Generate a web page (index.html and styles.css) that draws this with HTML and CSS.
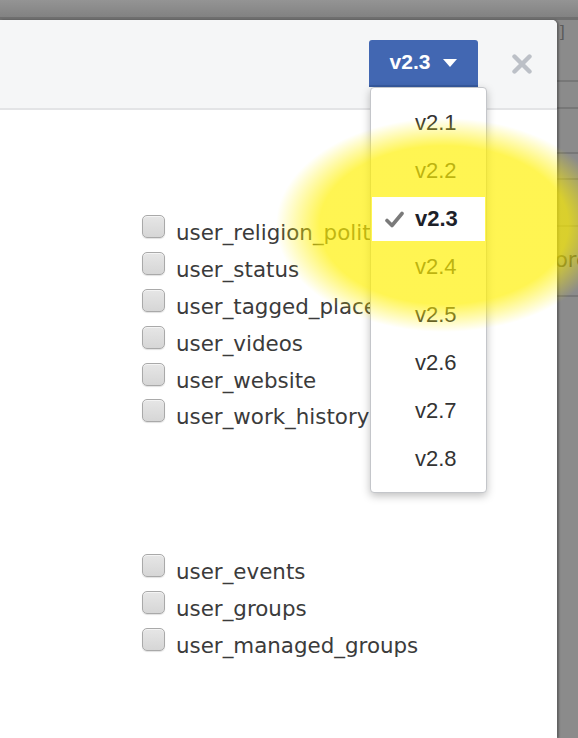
FILE: index.html
```html
<!DOCTYPE html>
<html>
<head>
<meta charset="utf-8">
<link rel="stylesheet" href="styles.css">
</head>
<body>
<div class="topbar"></div>
<div class="stage">
  <div class="modal">
    <header class="modal-head">
      <div class="version">
        <button class="ver-btn">v2.3<svg class="caret" width="14" height="8" viewBox="0 0 14 8"><path d="M0 0 H14 L7 8 Z" fill="#fff"/></svg></button>
        <ul class="ver-menu">
          <li>v2.1</li>
          <li>v2.2</li>
          <li class="selected"><svg class="check" width="19" height="17" viewBox="0 0 19 17"><path d="M2 9.5 L7 14.5 L17 2.5" fill="none" stroke="#7a7a7a" stroke-width="3.6" stroke-linecap="round" stroke-linejoin="round"/></svg>v2.3</li>
          <li>v2.4</li>
          <li>v2.5</li>
          <li>v2.6</li>
          <li>v2.7</li>
          <li>v2.8</li>
        </ul>
      </div>
      <button class="close" aria-label="Close"><svg width="20" height="20" viewBox="0 0 20 20"><path d="M2.5 2.5 L17.5 17.5 M17.5 2.5 L2.5 17.5" stroke="#bcc0c7" stroke-width="4.4" stroke-linecap="round"/></svg></button>
    </header>
    <div class="modal-body">
      <ul class="perm-group">
        <li><span class="box"></span>user_religion_politics</li>
        <li><span class="box"></span>user_status</li>
        <li><span class="box"></span>user_tagged_places</li>
        <li><span class="box"></span>user_videos</li>
        <li><span class="box"></span>user_website</li>
        <li><span class="box"></span>user_work_history</li>
      </ul>
      <ul class="perm-group second">
        <li><span class="box"></span>user_events</li>
        <li><span class="box"></span>user_groups</li>
        <li><span class="box"></span>user_managed_groups</li>
      </ul>
    </div>
  </div>
  <div class="backpage">
    <div class="bp-row r1"><span class="bracket">]</span></div>
    <div class="bp-row r2"></div>
    <div class="bp-row r3"></div>
    <div class="bp-row r4"></div>
    <div class="bp-row r5"></div>
    <div class="bp-row r6"><span class="bp-text">ore</span></div>
    <div class="bp-row r7"></div>
  </div>
</div>
<div class="highlight"></div>
</body>
</html>
```
FILE: styles.css
```css
* { box-sizing: border-box; }
html, body { margin: 0; padding: 0; }
body {
  width: 578px;
  height: 738px;
  overflow: hidden;
  background: #8b8b8b;
  font-family: "Liberation Sans", Arial, sans-serif;
}
.topbar {
  height: 20px;
  background: linear-gradient(#949494, #828282);
  border-bottom: 3px solid #6f6f6f;
}
.stage {
  display: flex;
  height: 718px;
}
.modal {
  width: 557px;
  flex: none;
  background: #fff;
  border-top-right-radius: 5px;
  box-shadow: 2px 0 2px rgba(0,0,0,0.3);
  position: relative;
}
.modal-head {
  height: 90px;
  background: #f5f6f7;
  border-top-right-radius: 5px;
  border-bottom: 2px solid #e3e4e6;
  display: flex;
  justify-content: flex-end;
  align-items: flex-start;
  padding: 20px 25px 0 0;
  gap: 34px;
}
.version { position: relative; }
.ver-btn {
  width: 109px;
  height: 47px;
  border: none;
  border-radius: 3px 3px 0 0;
  border-bottom: 2px solid #365a9f;
  background: #4267b2;
  color: #fff;
  font-family: "Liberation Sans", Arial, sans-serif;
  font-weight: bold;
  font-size: 21px;
  display: flex;
  align-items: center;
  justify-content: center;
  gap: 13px;
  padding: 0 0 1px 0;
  margin: 0;
}
.caret { margin-top: 1px; }
.ver-menu {
  position: absolute;
  top: 47px;
  left: 1px;
  width: 117px;
  margin: 0;
  padding: 13px 0 11px 0;
  list-style: none;
  background: #fff;
  border: 1px solid #c4c6ca;
  border-radius: 4px;
  box-shadow: 0 3px 8px rgba(0,0,0,0.25);
  display: flex;
  flex-direction: column;
  gap: 4px;
}
.ver-menu li {
  height: 44px;
  display: flex;
  align-items: center;
  padding-left: 44px;
  font-size: 22px;
  color: #333;
}
.ver-menu li.selected {
  position: relative;
  z-index: 6;
  background: #fff;
  font-weight: bold;
  color: #1d2129;
  padding-left: 13px;
  margin: 0 1px;
}
.check { margin-right: 11px; flex: none; }
.close {
  margin: 14px 0 0 0;
  padding: 0;
  border: none;
  background: none;
  width: 20px;
  height: 20px;
  display: block;
}
.close svg { display: block; }
.modal-body {
  padding: 105px 0 0 142px;
}
.perm-group {
  list-style: none;
  margin: 0;
  padding: 0;
}
.perm-group.second { margin-top: 118px; }
.perm-group li {
  font-family: "DejaVu Sans", Verdana, sans-serif;
  font-size: 21.4px;
  line-height: 36.9px;
  height: 36.9px;
  color: #3b3b3b;
  white-space: nowrap;
}
.box {
  display: inline-block;
  width: 23px;
  height: 23px;
  margin-right: 11px;
  vertical-align: 2px;
  border: 1px solid #a9a9a9;
  border-radius: 5px;
  background: linear-gradient(#e6e6e6, #d6d6d6);
  box-shadow: inset 0 1px 0 #f4f4f4, 0 1px 1px rgba(0,0,0,0.12);
}
.backpage {
  flex: 1;
  display: flex;
  flex-direction: column;
  overflow: hidden;
}
.bp-row { border-bottom: 2px solid #777; flex: none; }
.r1 { height: 62px; padding: 2px 0 0 3px; }
.r2 { height: 27px; }
.r3 { height: 45px; }
.r4 { height: 26px; }
.r5 { height: 47px; }
.r6 { height: 70px; padding-top: 21px; }
.r7 { border-bottom: none; flex: 1; }
.bracket {
  font-family: "Liberation Sans", Arial, sans-serif;
  font-size: 17px;
  color: #5a5a5a;
}
.bp-text {
  display: block;
  margin-left: -2px;
  font-family: "DejaVu Sans", Verdana, sans-serif;
  font-size: 21px;
  color: #3a3a3a;
  white-space: nowrap;
}
.highlight {
  position: absolute;
  left: 276px;
  top: 118px;
  width: 302px;
  height: 214px;
  z-index: 5;
  pointer-events: none;
  background-image: radial-gradient(closest-side, rgba(255,240,0,0.68) 74%, rgba(255,240,0,0) 100%);
  background-size: 336px 214px;
  background-repeat: no-repeat;
  background-position: 0 0;
}
```
